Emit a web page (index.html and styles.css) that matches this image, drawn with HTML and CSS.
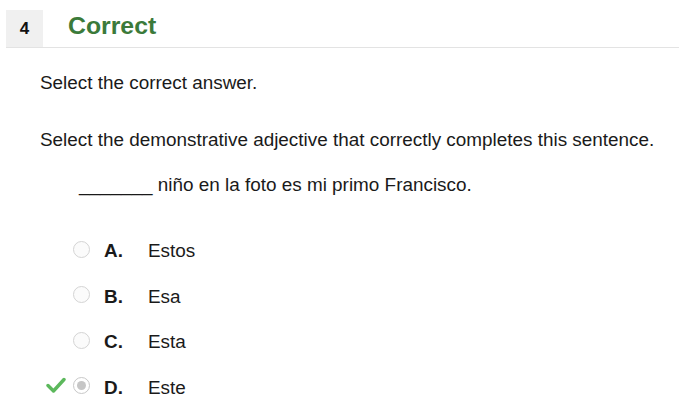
FILE: index.html
```html
<!DOCTYPE html>
<html>
<head>
<meta charset="utf-8">
<link rel="stylesheet" href="styles.css">
</head>
<body>
<div class="header">
  <div class="num">4</div>
  <div class="status">Correct</div>
</div>
<div class="content">
  <p class="instr">Select the correct answer.</p>
  <p class="question">Select the demonstrative adjective that correctly completes this sentence.</p>
  <p class="sentence">_______ niño en la foto es mi primo Francisco.</p>
  <ul class="options">
    <li class="opt"><span class="mark"></span><span class="radio"></span><span class="letter">A.</span><span class="text">Estos</span></li>
    <li class="opt"><span class="mark"></span><span class="radio"></span><span class="letter">B.</span><span class="text">Esa</span></li>
    <li class="opt"><span class="mark"></span><span class="radio"></span><span class="letter">C.</span><span class="text">Esta</span></li>
    <li class="opt selected"><span class="mark"><svg width="20" height="16" viewBox="0 0 20 16"><path d="M2 8.5 L7.5 14 L18 2.5" fill="none" stroke="#5cb85c" stroke-width="3.4" stroke-linecap="round" stroke-linejoin="round"/></svg></span><span class="radio"><span class="dot"></span></span><span class="letter">D.</span><span class="text">Este</span></li>
  </ul>
</div>
</body>
</html>
```

FILE: styles.css
```css
html, body {
  margin: 0;
  padding: 0;
  background: #fff;
}
body {
  font-family: "Liberation Sans", Arial, sans-serif;
  color: #1a1a1a;
  width: 679px;
  height: 407px;
  overflow: hidden;
}
.header {
  display: flex;
  align-items: stretch;
  margin: 10px 0 0 6px;
  height: 37px;
  border-bottom: 1px solid #e3e3e3;
}
.num {
  width: 37px;
  background: #f0f0f0;
  display: flex;
  align-items: center;
  justify-content: center;
  font-weight: bold;
  font-size: 17px;
  color: #111;
}
.status {
  margin-left: 25px;
  display: flex;
  align-items: center;
  font-weight: bold;
  font-size: 24.8px;
  color: #3b7a3a;
  padding-bottom: 6px;
}
.content {
  padding-left: 40px;
}
.instr {
  margin: 24px 0 0 0;
  font-size: 18.9px;
  line-height: 22px;
}
.question {
  margin: 35px 0 0 0;
  font-size: 18.9px;
  line-height: 22px;
}
.sentence {
  margin: 23px 0 0 39px;
  font-size: 18.9px;
  line-height: 22px;
}
.options {
  list-style: none;
  margin: 44px 0 0 0;
  padding: 0;
}
.opt {
  display: flex;
  align-items: center;
  height: 22px;
  margin-bottom: 23.5px;
  font-size: 18.9px;
}
.mark {
  width: 27px;
  margin-left: 6px;
  display: flex;
  align-items: center;
  height: 16px;
  margin-top: -6px;
}
.radio {
  width: 17px;
  height: 17px;
  border: 1px solid #d4d4d4;
  border-radius: 50%;
  background: #fbfbfb;
  box-sizing: border-box;
  display: flex;
  align-items: center;
  justify-content: center;
  margin-top: -4px;
}
.selected .radio {
  border-color: #c8c8c8;
  background: #fff;
}
.dot {
  width: 9px;
  height: 9px;
  border-radius: 50%;
  background: #c6c6c6;
}
.letter {
  font-weight: bold;
  margin-left: 14px;
  width: 44px;
}
```
